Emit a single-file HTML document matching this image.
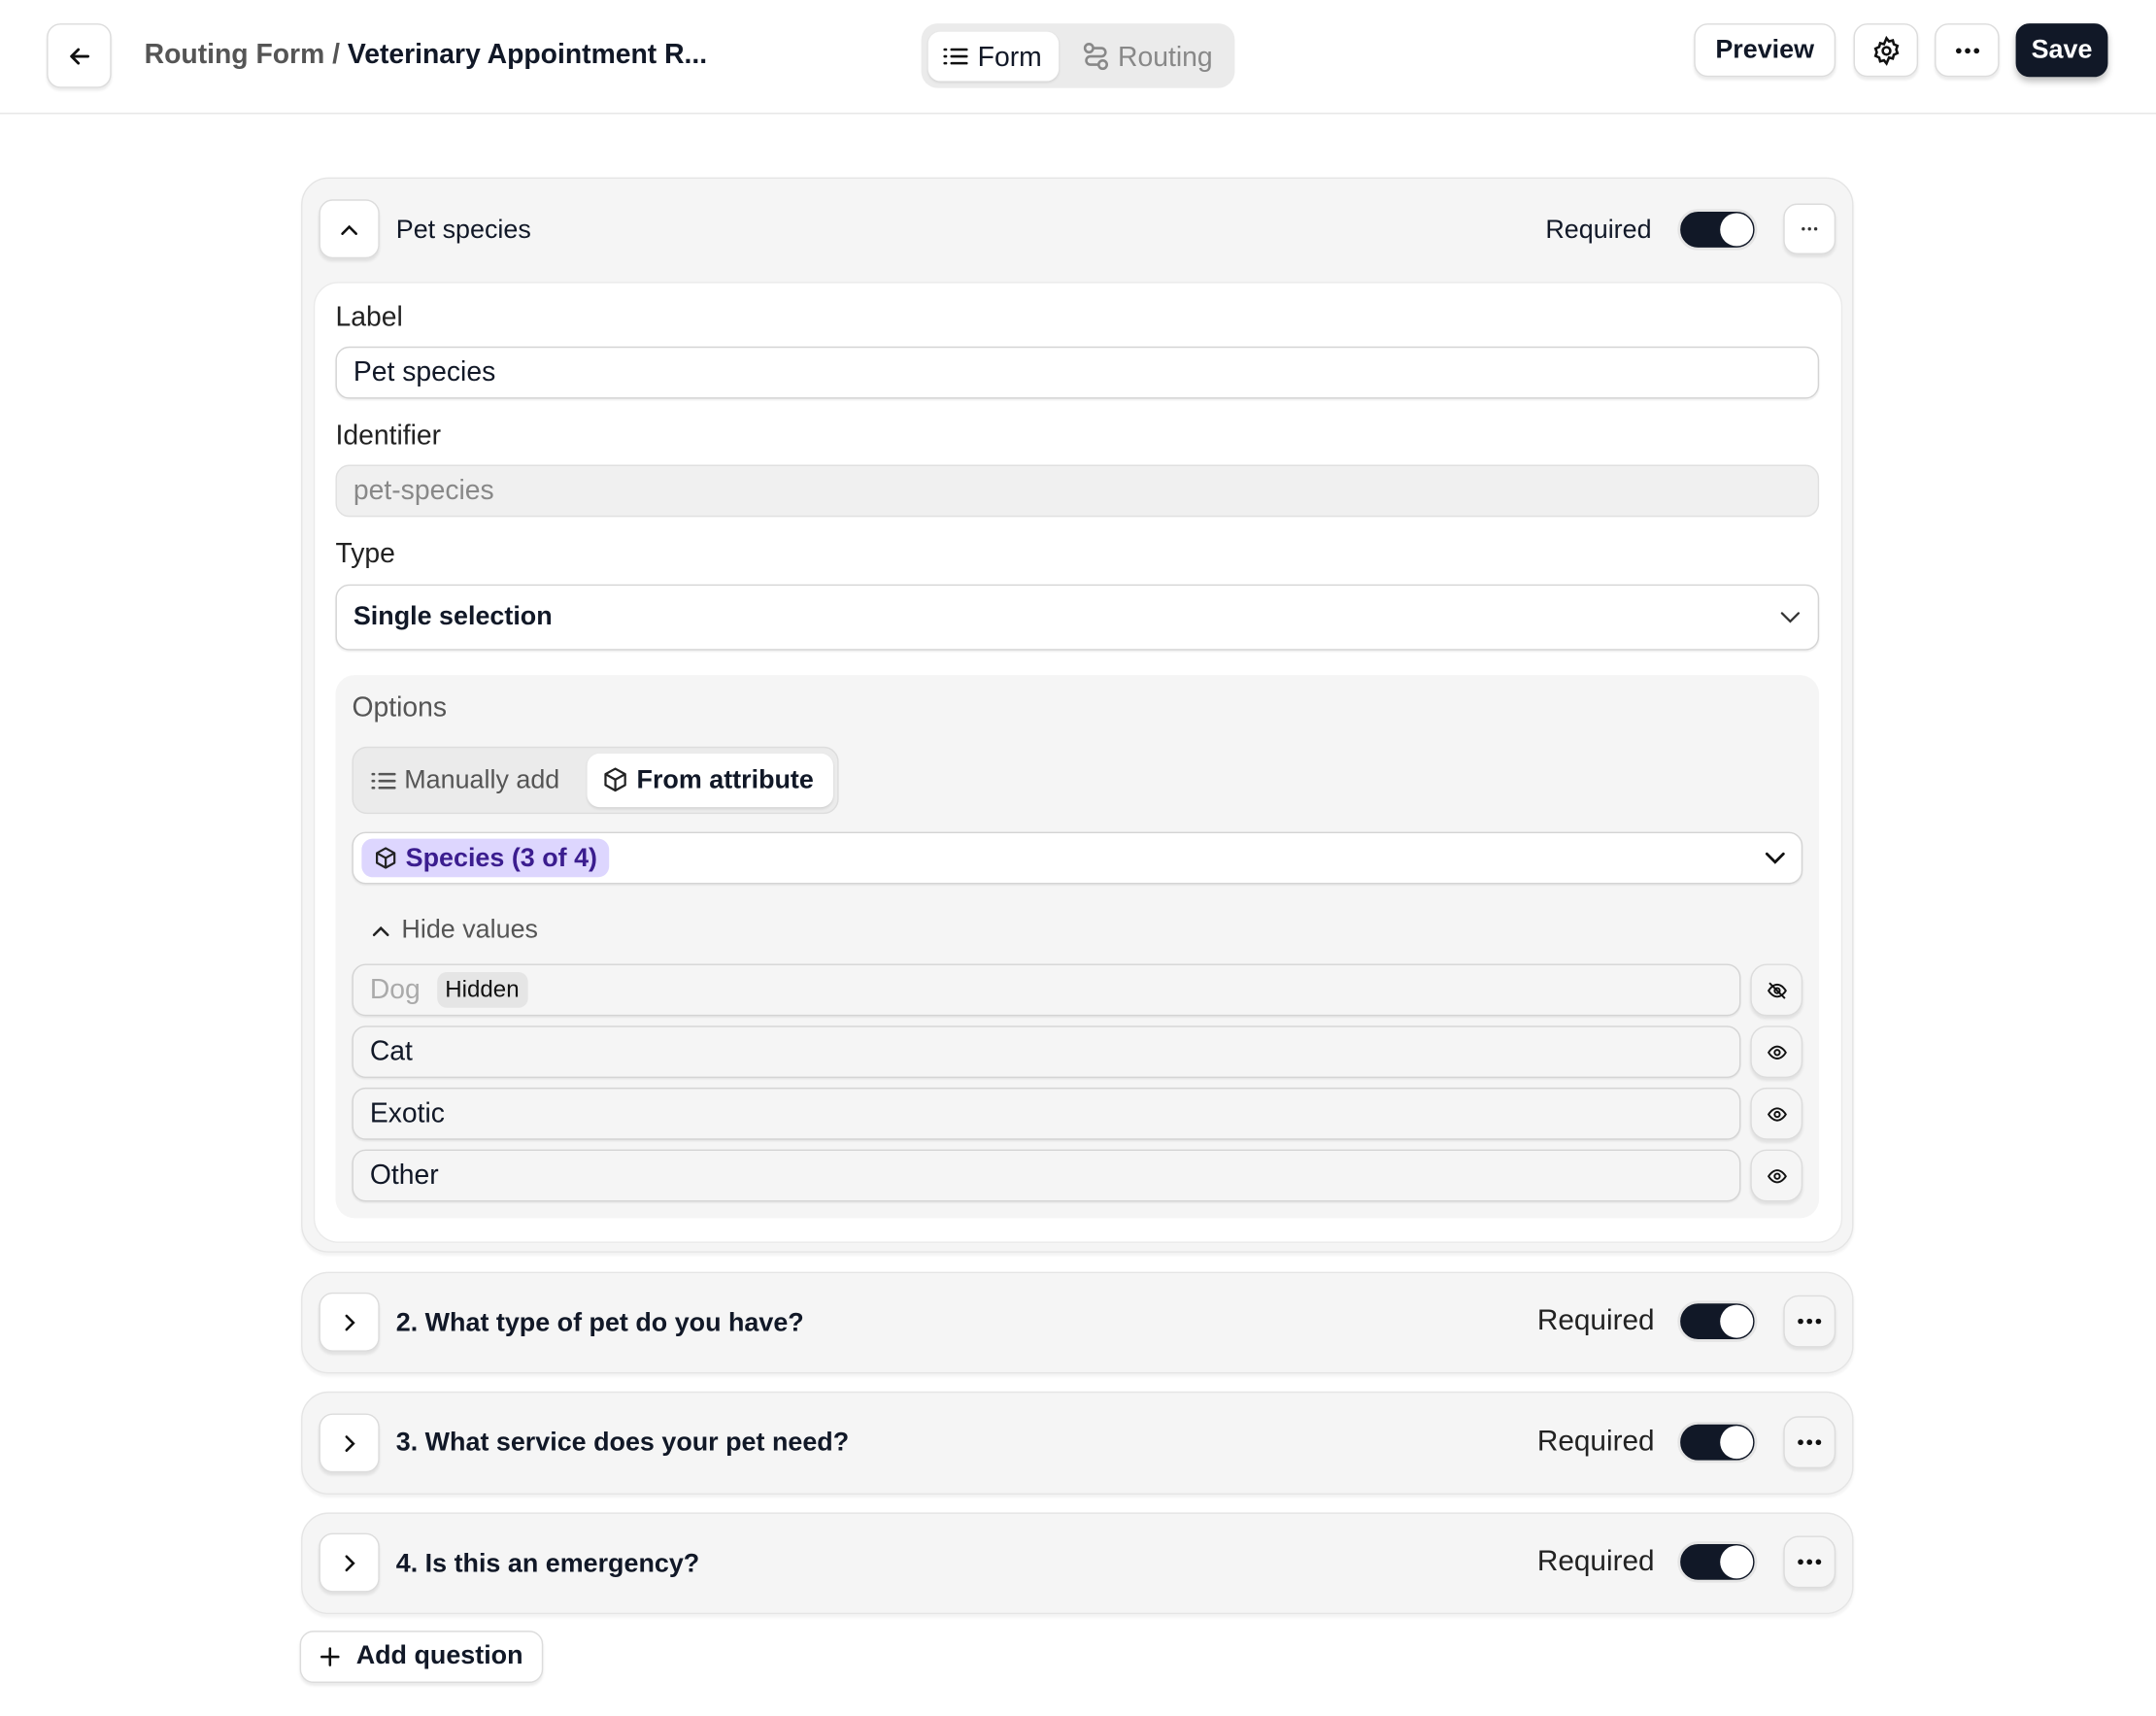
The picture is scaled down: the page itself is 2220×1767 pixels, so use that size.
<!DOCTYPE html>
<html><head><meta charset="utf-8"><style>
*{box-sizing:border-box;margin:0;padding:0}
html,body{width:2220px;height:1766px;overflow:hidden;background:#fff;font-family:"Liberation Sans",sans-serif;color:#111827}
#w{position:absolute;left:0;top:0;width:1568px;height:1248px;transform:scale(1.41582);transform-origin:0 0}
.a{position:absolute}
.btn{position:absolute;background:#fff;border:1px solid #dcdcdc;border-radius:10px;box-shadow:0 2px 2px rgba(0,0,0,.08);display:flex;align-items:center;justify-content:center}
.t{position:absolute;white-space:nowrap;line-height:1}
.inp{position:absolute;border:1px solid #d4d4d4;border-radius:10px;background:#fff;box-shadow:0 1px 1px rgba(0,0,0,.06);display:flex;align-items:center;padding-left:12px;font-size:20px}
.tog{position:absolute;width:58px;height:30px;border-radius:15px;background:#111827;border:2px solid #e5e5e5}
.tog:after{content:"";position:absolute;right:1px;top:1px;width:24px;height:24px;border-radius:50%;background:#fff}
.card{position:absolute;left:219px;width:1129px;background:#f5f5f5;border:1px solid #e5e5e5;border-radius:20px;box-shadow:0 2px 2px rgba(0,0,0,.05)}
svg{display:block}
</style></head><body><div id="w">
<div class="a" style="left:0;top:82px;width:1568px;height:1px;background:#e5e5e5"></div>
<div class="btn" style="left:34px;top:17px;width:47px;height:47px"><svg width="20" height="20" viewBox="0 0 20 20" fill="none" stroke="#111" stroke-width="2" stroke-linecap="round" stroke-linejoin="round"><path d="M16 10H4M9 5l-5 5 5 5"/></svg></div>
<div class="t" style="left:105px;top:30px;font-size:20px;font-weight:bold;color:#555">Routing Form / <span style="color:#111827">Veterinary Appointment R...</span></div>
<div class="a" style="left:670px;top:17px;width:228px;height:47px;background:#ebebeb;border-radius:12px"></div>
<div class="a" style="left:675px;top:23px;width:95px;height:36px;background:#fff;border-radius:9px;box-shadow:0 1px 2px rgba(0,0,0,.1)"></div>
<svg class="a" style="left:686px;top:33px" width="18" height="16" viewBox="0 0 18 16" fill="none" stroke="#111" stroke-width="1.8" stroke-linecap="round"><path d="M1 3h1M1 8h1M1 13h1M6 3h11M6 8h11M6 13h11"/></svg>
<div class="t" style="left:711px;top:32px;font-size:20px">Form</div>
<svg class="a" style="left:788px;top:31px" width="18" height="20" viewBox="0 0 18 20" fill="none" stroke="#888" stroke-width="1.8"><circle cx="4" cy="4" r="3"/><circle cx="14" cy="16" r="3"/><path d="M7 4h6a3 3 0 0 1 0 6H5a3 3 0 0 0 0 6h6"/></svg>
<div class="t" style="left:813px;top:32px;font-size:20px;color:#888">Routing</div>
<div class="btn" style="left:1232px;top:17px;width:103px;height:39px;font-size:19px;font-weight:bold">Preview</div>
<div class="btn" style="left:1348px;top:17px;width:47px;height:39px"><svg width="22" height="22" viewBox="0 0 24 24" fill="none" stroke="#111" stroke-width="2"><circle cx="12" cy="12" r="3"/><path d="M12 2l2 2.5 3-.8.8 3 2.9 1.3-1 2.9 1 2.9-2.9 1.3-.8 3-3-.8L12 22l-2-2.5-3 .8-.8-3-2.9-1.3 1-2.9-1-2.9 2.9-1.3.8-3 3 .8z"/></svg></div>
<div class="btn" style="left:1407px;top:17px;width:47px;height:39px"><svg width="18" height="4" viewBox="0 0 18 4" fill="#111"><circle cx="2.5" cy="2" r="2"/><circle cx="9" cy="2" r="2"/><circle cx="15.5" cy="2" r="2"/></svg></div>
<div class="btn" style="left:1466px;top:17px;width:67px;height:39px;background:#111827;border-color:#111827;color:#fff;font-size:19px;font-weight:bold;box-shadow:0 3px 5px rgba(0,0,0,.25)">Save</div>

<div class="card" style="top:129px;height:782px"></div>
<div class="btn" style="left:232px;top:145px;width:44px;height:43px"><svg width="14" height="10" viewBox="0 0 14 10" fill="none" stroke="#111" stroke-width="1.8" stroke-linecap="round"><path d="M2 8l5-5 5 5"/></svg></div>
<div class="t" style="left:288px;top:158px;font-size:19px">Pet species</div>
<div class="t" style="left:1124px;top:158px;font-size:19px">Required</div>
<div class="tog" style="left:1220px;top:152px"></div>
<div class="btn" style="left:1297px;top:148px;width:38px;height:37px"><svg width="12" height="3" viewBox="0 0 12 3" fill="#333"><circle cx="1.5" cy="1.5" r="1.2"/><circle cx="6" cy="1.5" r="1.2"/><circle cx="10.5" cy="1.5" r="1.2"/></svg></div>
<div class="a" style="left:228px;top:205px;width:1112px;height:699px;background:#fff;border-radius:18px;border:1px solid #eaeaea"></div>
<div class="t" style="left:244px;top:221px;font-size:20px;color:#222">Label</div>
<div class="inp" style="left:244px;top:252px;width:1079px;height:38px">Pet species</div>
<div class="t" style="left:244px;top:307px;font-size:20px;color:#222">Identifier</div>
<div class="inp" style="left:244px;top:338px;width:1079px;height:38px;background:#f0f0f0;color:#888;box-shadow:none;border-color:#e0e0e0">pet-species</div>
<div class="t" style="left:244px;top:393px;font-size:20px;color:#222">Type</div>
<div class="inp" style="left:244px;top:425px;width:1079px;height:48px;font-size:19px;font-weight:bold">Single selection</div>
<svg class="a" style="left:1294px;top:443px" width="16" height="12" viewBox="0 0 16 12" fill="none" stroke="#333" stroke-width="1.6" stroke-linecap="round"><path d="M2 3l6 6 6-6"/></svg>
<div class="a" style="left:244px;top:491px;width:1079px;height:395px;background:#f5f5f5;border-radius:14px"></div>
<div class="t" style="left:256px;top:505px;font-size:20px;color:#555">Options</div>
<div class="a" style="left:256px;top:543px;width:354px;height:49px;background:#ebebeb;border-radius:11px;border:1px solid #ddd"></div>
<svg class="a" style="left:270px;top:560px" width="18" height="16" viewBox="0 0 18 16" fill="none" stroke="#555" stroke-width="1.8" stroke-linecap="round"><path d="M1 3h1M1 8h1M1 13h1M6 3h11M6 8h11M6 13h11"/></svg>
<div class="t" style="left:294px;top:558px;font-size:19px;color:#555">Manually add</div>
<div class="a" style="left:427px;top:548px;width:179px;height:39px;background:#fff;border-radius:9px;box-shadow:0 1px 2px rgba(0,0,0,.1)"></div>
<svg class="a" style="left:438px;top:557px" width="19" height="20" viewBox="0 0 24 24" fill="none" stroke="#222" stroke-width="2" stroke-linejoin="round"><path d="M12 2l9 5v10l-9 5-9-5V7z"/><path d="M3 7l9 5 9-5M12 12v10"/></svg>
<div class="t" style="left:463px;top:558px;font-size:19px;font-weight:bold">From attribute</div>
<div class="inp" style="left:256px;top:605px;width:1055px;height:38px"></div>
<div class="a" style="left:263px;top:610px;width:180px;height:28px;background:#ddd6fe;border-radius:8px"></div>
<svg class="a" style="left:272px;top:615px" width="17" height="18" viewBox="0 0 24 24" fill="none" stroke="#222" stroke-width="2.2" stroke-linejoin="round"><path d="M12 2l9 5v10l-9 5-9-5V7z"/><path d="M3 7l9 5 9-5M12 12v10"/></svg>
<div class="t" style="left:295px;top:615px;font-size:19px;color:#3b1d8f;font-weight:bold">Species (3 of 4)</div>
<svg class="a" style="left:1283px;top:618px" width="16" height="12" viewBox="0 0 16 12" fill="none" stroke="#111" stroke-width="2" stroke-linecap="round"><path d="M2 3l6 6 6-6"/></svg>
<svg class="a" style="left:270px;top:672px" width="14" height="10" viewBox="0 0 14 10" fill="none" stroke="#222" stroke-width="1.8" stroke-linecap="round"><path d="M2 8l5-5 5 5"/></svg>
<div class="t" style="left:292px;top:667px;font-size:19px;color:#555">Hide values</div>

<div class="inp" style="left:256px;top:701px;width:1010px;height:38px;background:#f5f5f5;color:#aaa">Dog<span style="margin-left:12px;background:#e5e5e5;color:#111;font-size:17px;padding:3px 6px;border-radius:7px">Hidden</span></div>
<div class="inp" style="left:256px;top:746px;width:1010px;height:38px;background:#f5f5f5">Cat</div>
<div class="inp" style="left:256px;top:791px;width:1010px;height:38px;background:#f5f5f5">Exotic</div>
<div class="inp" style="left:256px;top:836px;width:1010px;height:38px;background:#f5f5f5">Other</div>
<div class="btn" style="left:1273px;top:701px;width:38px;height:38px;background:#f5f5f5;border-radius:12px"><svg width="15" height="15" viewBox="0 0 24 24" fill="none" stroke="#111" stroke-width="2.2"><path d="M2 12s4-7 10-7 10 7 10 7-4 7-10 7S2 12 2 12z"/><circle cx="12" cy="12" r="3"/><path d="M3 3l18 18"/></svg></div>
<div class="btn" style="left:1273px;top:746px;width:38px;height:38px;background:#f5f5f5;border-radius:12px"><svg width="15" height="15" viewBox="0 0 24 24" fill="none" stroke="#111" stroke-width="2.2"><path d="M2 12s4-7 10-7 10 7 10 7-4 7-10 7S2 12 2 12z"/><circle cx="12" cy="12" r="3"/></svg></div>
<div class="btn" style="left:1273px;top:791px;width:38px;height:38px;background:#f5f5f5;border-radius:12px"><svg width="15" height="15" viewBox="0 0 24 24" fill="none" stroke="#111" stroke-width="2.2"><path d="M2 12s4-7 10-7 10 7 10 7-4 7-10 7S2 12 2 12z"/><circle cx="12" cy="12" r="3"/></svg></div>
<div class="btn" style="left:1273px;top:836px;width:38px;height:38px;background:#f5f5f5;border-radius:12px"><svg width="15" height="15" viewBox="0 0 24 24" fill="none" stroke="#111" stroke-width="2.2"><path d="M2 12s4-7 10-7 10 7 10 7-4 7-10 7S2 12 2 12z"/><circle cx="12" cy="12" r="3"/></svg></div>

<div class="card" style="top:925px;height:74px"></div>
<div class="card" style="top:1012px;height:75px"></div>
<div class="card" style="top:1100px;height:74px"></div>

<div class="btn" style="left:232px;top:940px;width:44px;height:43px"><svg width="10" height="14" viewBox="0 0 10 14" fill="none" stroke="#111" stroke-width="1.8" stroke-linecap="round"><path d="M3 2l5 5-5 5"/></svg></div>
<div class="t" style="left:288px;top:953px;font-size:19px;font-weight:bold">2. What type of pet do you have?</div>
<div class="t" style="left:1118px;top:950px;font-size:21px;color:#222">Required</div>
<div class="tog" style="left:1220px;top:946px"></div>
<div class="btn" style="left:1297px;top:942px;width:38px;height:38px;background:#f5f5f5;border-radius:11px"><svg width="18" height="4" viewBox="0 0 18 4" fill="#111"><circle cx="2.5" cy="2" r="2"/><circle cx="9" cy="2" r="2"/><circle cx="15.5" cy="2" r="2"/></svg></div>

<div class="btn" style="left:232px;top:1028px;width:44px;height:43px"><svg width="10" height="14" viewBox="0 0 10 14" fill="none" stroke="#111" stroke-width="1.8" stroke-linecap="round"><path d="M3 2l5 5-5 5"/></svg></div>
<div class="t" style="left:288px;top:1040px;font-size:19px;font-weight:bold">3. What service does your pet need?</div>
<div class="t" style="left:1118px;top:1038px;font-size:21px;color:#222">Required</div>
<div class="tog" style="left:1220px;top:1034px"></div>
<div class="btn" style="left:1297px;top:1030px;width:38px;height:38px;background:#f5f5f5;border-radius:11px"><svg width="18" height="4" viewBox="0 0 18 4" fill="#111"><circle cx="2.5" cy="2" r="2"/><circle cx="9" cy="2" r="2"/><circle cx="15.5" cy="2" r="2"/></svg></div>

<div class="btn" style="left:232px;top:1115px;width:44px;height:43px"><svg width="10" height="14" viewBox="0 0 10 14" fill="none" stroke="#111" stroke-width="1.8" stroke-linecap="round"><path d="M3 2l5 5-5 5"/></svg></div>
<div class="t" style="left:288px;top:1128px;font-size:19px;font-weight:bold">4. Is this an emergency?</div>
<div class="t" style="left:1118px;top:1125px;font-size:21px;color:#222">Required</div>
<div class="tog" style="left:1220px;top:1121px"></div>
<div class="btn" style="left:1297px;top:1117px;width:38px;height:38px;background:#f5f5f5;border-radius:11px"><svg width="18" height="4" viewBox="0 0 18 4" fill="#111"><circle cx="2.5" cy="2" r="2"/><circle cx="9" cy="2" r="2"/><circle cx="15.5" cy="2" r="2"/></svg></div>

<div class="btn" style="left:218px;top:1186px;width:177px;height:38px;justify-content:flex-start;padding-left:14px"><svg width="14" height="14" viewBox="0 0 14 14" stroke="#111" stroke-width="1.8" stroke-linecap="round"><path d="M7 1v12M1 7h12"/></svg><span style="margin-left:12px;font-size:19px;font-weight:bold">Add question</span></div>
</div></body></html>
